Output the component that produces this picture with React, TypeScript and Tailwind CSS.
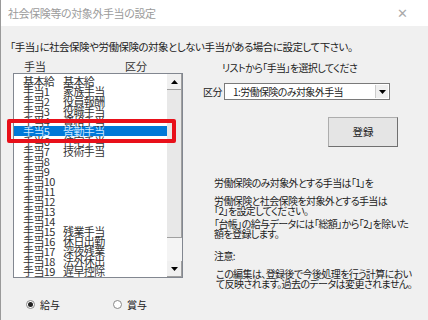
import React from 'react'

const rows: [string, string][] = [
  ['基本給', '基本給'],
  ['手当1', '家族手当'],
  ['手当2', '役員報酬'],
  ['手当3', '役職手当'],
  ['手当4', '資格手当'],
  ['手当5', '皆勤手当'],
  ['手当6', '住宅手当'],
  ['手当7', '技術手当'],
  ['手当8', ''],
  ['手当9', ''],
  ['手当10', ''],
  ['手当11', ''],
  ['手当12', ''],
  ['手当13', ''],
  ['手当14', ''],
  ['手当15', '残業手当'],
  ['手当16', '休日出勤'],
  ['手当17', '深夜残業'],
  ['手当18', '法外休出'],
  ['手当19', '遅早控除'],
]

function Arrow({ up }: { up?: boolean }) {
  return (
    <svg width="7" height="4" viewBox="0 0 7 4">
      <path d={up ? 'M0 4 L3.5 0 L7 4 Z' : 'M0 0 L7 0 L3.5 4 Z'} fill="#000" />
    </svg>
  )
}

function AllowanceList() {
  return (
    <div className="relative flex h-[205px] w-[170px] border border-[#828790] bg-white">
      <div className="flex-1 overflow-hidden pt-[2px]">
        {rows.map(([code, name], i) => (
          <div
            key={code}
            className={
              'flex h-[10px] items-center whitespace-nowrap leading-[10px] tracking-[-0.6px] ' +
              (i === 5 ? 'bg-[#0078d7] text-[#cfe8ff]' : 'text-[#333]')
            }
          >
            <span className="w-[49px] shrink-0 pl-[9px]">{code}</span>
            <span>{name}</span>
          </div>
        ))}
      </div>
      <div className="flex w-[15px] shrink-0 flex-col bg-[#f0f0f0]">
        <div className="flex h-[16px] items-center justify-center border-r border-b border-[#a0a0a0] bg-[#f0f0f0]">
          <Arrow up />
        </div>
        <div className="h-[148px] border-r border-b border-[#a0a0a0] bg-[#e8e8e8]" />
        <div className="flex-1 bg-[#f4f4f4]" />
        <div className="flex h-[16px] items-center justify-center border-r border-b border-[#a0a0a0] bg-[#f0f0f0]">
          <Arrow />
        </div>
      </div>
      <div className="absolute left-[-7px] top-[45px] h-[24px] w-[169px] rounded-[2px] border-[4px] border-[#e8101a]" />
    </div>
  )
}

export default function App() {
  return (
    <div
      className="flex h-[320px] w-[428px] flex-col overflow-hidden border-l border-[#9a9a9a] bg-[#f0f0f0] text-[10px] text-[#222] [font-feature-settings:'palt']"
      style={{ fontFamily: '"Noto Sans CJK JP", sans-serif' }}
    >
      <div className="flex h-[26px] items-center justify-between bg-white pl-[7px] pr-[20px] text-[11px] text-[#9b9b9b]">
        <span className="tracking-[-0.4px]">社会保険等の対象外手当の設定</span>
        <span className="text-[13px] font-light text-[#aaa]">✕</span>
      </div>

      <div className="whitespace-nowrap pl-[9px] pt-[15px] text-[10.5px] leading-[12px] tracking-[-0.5px]">
        「手当」に社会保険や労働保険の対象としない手当がある場合に設定して下さい。
      </div>

      <div className="flex pt-[7px]">
        <div className="flex w-[202px] shrink-0 flex-col pl-[12px]">
          <div className="flex h-[12px] items-center text-[11px] text-[#333]">
            <span className="w-[112px] pl-[11px]">手当</span>
            <span>区分</span>
          </div>
          <div className="mt-[1px] text-[11px]">
            <AllowanceList />
          </div>
          <div className="mt-[19px] flex items-center text-[10px]">
            <span className="ml-[13px] flex h-[9px] w-[9px] items-center justify-center rounded-full border border-[#888] bg-white">
              <span className="h-[5px] w-[5px] rounded-full bg-[#222]" />
            </span>
            <span className="ml-[5px]">給与</span>
            <span className="ml-[53px] h-[9px] w-[9px] rounded-full border border-[#888] bg-white" />
            <span className="ml-[5px]">賞与</span>
          </div>
        </div>

        <div className="flex flex-col whitespace-nowrap tracking-[-0.6px]">
          <div className="ml-[19px] pt-[2px] leading-[12px]">リストから「手当」を選択してくださ</div>
          <div className="mt-[9px] flex items-center">
            <span className="w-[21px] tracking-[-0.5px]">区分</span>
            <div className="flex h-[17px] w-[166px] items-center border border-[#7a7a7a] bg-white">
              <span className="flex-1 pl-[8px]">1:労働保険のみ対象外手当</span>
              <div className="mr-[1px] flex h-[13px] w-[13px] items-center justify-center border-l border-[#ccc] bg-[#f0f0f0]">
                <Arrow />
              </div>
            </div>
          </div>
          <div className="ml-[125px] mt-[17px] flex h-[30px] w-[70px] items-center justify-center border border-[#adadad] border-b-[#707070] border-r-[#707070] bg-[#e5e5e5] text-[10.5px] tracking-normal">
            登録
          </div>
          <div className="ml-[11px] mt-[31px] leading-[10px]">
            <div>労働保険のみ対象外とする手当は「1」を</div>
            <div className="mt-[8px]">労働保険と社会保険を対象外とする手当は</div>
            <div>「2」を設定してください。</div>
            <div className="mt-[3px]">「台帳」の給与データには「総額」から「2」を除いた</div>
            <div>額を登録します。</div>
            <div className="mt-[12px]">注意:</div>
            <div className="ml-[2px] mt-[8px]">この編集は、登録後で今後処理を行う計算におい</div>
            <div className="ml-[2px]">て反映されます。過去のデータは変更されません。</div>
          </div>
        </div>
      </div>
    </div>
  )
}
